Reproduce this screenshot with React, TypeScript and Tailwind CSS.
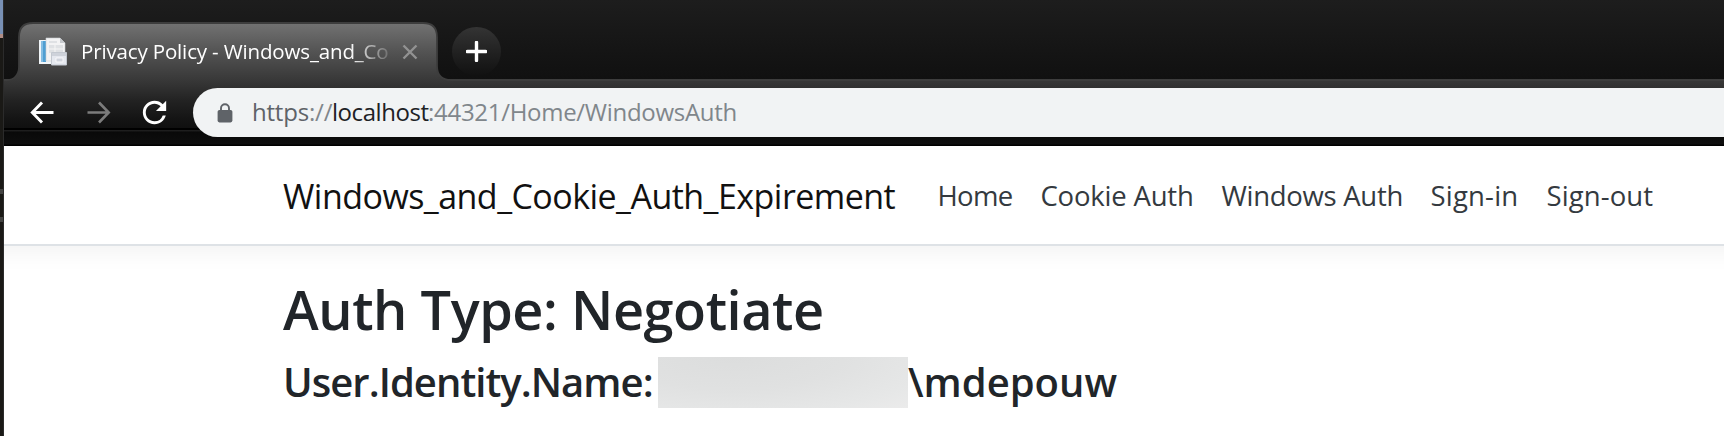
const navItems = [
  { label: "Home", className: "w-[103px] tracking-[-0.7px]" },
  { label: "Cookie Auth", className: "w-[181px] tracking-[-0.2px]" },
  { label: "Windows Auth", className: "w-[209px] tracking-[-0.3px]" },
  { label: "Sign-in", className: "w-[116px] tracking-[0.2px]" },
  { label: "Sign-out", className: "tracking-[0.1px]" },
];

function Favicon() {
  return (
    <svg className="h-[30px] w-[30px] shrink-0" viewBox="0 0 30 30">
      <path d="M1 3h17v24H1z" fill="#f1f5f8" />
      <path d="M3 4h5v21H3z" fill="#4f9fd3" />
      <path d="M3 4h2v21H3z" fill="#85bde2" />
      <path d="M8 1h14l5 5v18H8z" fill="#f3f3f4" stroke="#c9ccd0" strokeWidth=".6" />
      <path d="M22 1v5h5z" fill="#c6c9cd" />
      <path d="M11 4h8v2h-8zM11 8h14v8H11z" fill="#dfe1e4" />
      <path d="M17 8v14M11 12h14" stroke="#f6f6f6" strokeWidth="1" />
      <path d="M13.500 15.500h15v12.500h-15z" fill="#e5e8ef" stroke="#c3c8d0" />
      <path d="M14 16h14v3H14z" fill="#ced2da" />
      <path d="M18 21h7v4h-7z" fill="#cfd3dc" stroke="#f8f8fa" />
    </svg>
  );
}

function TabShape() {
  return (
    <svg className="absolute top-0 left-0 h-[82px] w-[452px]" viewBox="0 0 452 82">
      <defs>
        <linearGradient id="tab" x1="0" y1="22" x2="0" y2="82" gradientUnits="userSpaceOnUse">
          <stop offset="0" stopColor="#737373" />
          <stop offset=".5" stopColor="#535353" />
          <stop offset="1" stopColor="#363636" />
        </linearGradient>
      </defs>
      <path
        d="M0 82V80H3C10 80 15 75 15 67V37C15 28 20 23 29 23H419C428 23 433 28 433 37V66C433 75 438 80 447 80H452V82Z"
        fill="url(#tab)"
      />
      <path
        d="M0 80H3C10 80 15 75 15 67V37C15 28 20 23 29 23H419C428 23 433 28 433 37V66C433 75 438 80 447 80H452"
        fill="none"
        stroke="#3d3d3d"
        strokeWidth="1.8"
      />
    </svg>
  );
}

function TabStrip() {
  return (
    <div className="relative flex h-[82px] bg-linear-to-b from-[#1d1d1d] to-[#101010]">
      <div className="mt-auto h-[3px] w-full border-t-2 border-[#3d3d3d] bg-[#363636]" />
      <TabShape />
      <div className="absolute inset-0 flex items-start">
        <div className="mt-[22px] ml-[34px] flex h-[60px] items-center">
          <Favicon />
          <div className="ml-[13px] w-[308px] overflow-hidden pb-[2px] text-[20.5px] leading-[30px] tracking-[-0.15px] whitespace-nowrap text-white mask-[linear-gradient(to_right,black_268px,transparent_316px)]">
            Privacy Policy - Windows_and_Co
          </div>
          <svg className="ml-[13px] h-4 w-4" viewBox="0 0 16 16">
            <path d="M1.500 1.500L14.500 14.500M14.500 1.500L1.500 14.500" stroke="#929292" strokeWidth="2.4" />
          </svg>
        </div>
        <div className="mt-[27px] ml-[34px] flex h-[49px] w-[49px] items-center justify-center rounded-full bg-linear-to-b from-[#343434] to-[#111111]">
          <svg className="h-[21px] w-[21px]" viewBox="0 0 21 21">
            <path d="M10.500 1.400V19.600M1.400 10.500H19.600" stroke="#fff" strokeWidth="3.4" strokeLinecap="round" />
          </svg>
        </div>
      </div>
    </div>
  );
}

function Toolbar() {
  return (
    <div className="relative flex h-16 bg-[linear-gradient(to_bottom,#363636_0px,#232323_18px,#151515_36px,#101010_46px,#000_46px,#000_48px,#202020_48px,#1c1c1c_49px,#090909_50px,#0e0e0e_62px,#000_63px)]">
      <svg className="mt-[18px] ml-[25px] h-[25px] w-[26px]" viewBox="0 0 26 25">
        <path d="M13 2.500L3.300 12.500L13 22.500M3.500 12.500H24.500" fill="none" stroke="#fff" strokeWidth="2.9" />
      </svg>
      <svg className="mt-[18px] ml-[31px] h-[25px] w-[26px]" viewBox="0 0 26 25">
        <path d="M13 2.500L22.700 12.500L13 22.500M1.500 12.500H22.500" fill="none" stroke="#7c7c7c" strokeWidth="2.6" />
      </svg>
      <svg className="mt-[13px] ml-[25px] h-[35px] w-[35px]" viewBox="0 0 24 24" fill="#fff">
        <path d="M17.650 6.350A7.958 7.958 0 0 0 12 4c-4.420 0-7.990 3.580-7.990 8s3.570 8 7.990 8c3.730 0 6.840-2.550 7.730-6h-2.080A5.990 5.990 0 0 1 12 18c-3.310 0-6-2.690-6-6s2.690-6 6-6c1.660 0 3.140.690 4.220 1.780L13 11h7V4l-2.350 2.350z" />
      </svg>
      <div className="mt-[6px] ml-[21px] flex h-[49px] flex-1 items-center rounded-l-full bg-[#f1f3f4] pl-[24px]">
        <svg className="h-5 w-4" viewBox="0 0 16 20">
          <path d="M4 8V5.200a4 4 0 0 1 8 0V8" fill="none" stroke="#5f6368" strokeWidth="1.900" />
          <rect x=".6" y="7" width="14.800" height="12.400" rx="1.800" fill="#5f6368" />
        </svg>
        <div className="ml-[19px] flex pb-px text-[24px] leading-8 whitespace-pre">
          <span className="w-[80px] tracking-[-0.2px] text-[#5f6368]">
            https<span className="text-[#80868b]">://</span>
          </span>
          <span className="w-[96px] tracking-[-0.45px] text-[#202124]">localhost</span>
          <span className="tracking-[-0.29px] text-[#80868b]">:44321/Home/WindowsAuth</span>
        </div>
      </div>
    </div>
  );
}

export default function App() {
  return (
    <div className="flex h-[436px] w-[1724px] overflow-hidden bg-white font-['Open_Sans',sans-serif]">
      <div className="flex w-1 shrink-0 flex-col border-r border-[#2b2b2b] bg-[#1a1916]">
        <div className="h-[34px] bg-[#7890b5]" />
        <div className="h-1 bg-[#b08d85]" />
        <div className="mt-[151px] h-[5px] bg-[#444442]" />
        <div className="mt-[23px] h-[5px] bg-[#444442]" />
      </div>
      <div className="min-w-0 flex-1 overflow-hidden">
        <TabStrip />
        <Toolbar />
        <nav className="-mx-8 flex h-[100px] items-center border-b-2 border-[#dee2e6] pt-[2px] pl-[311px] shadow-[0_7px_21px_rgba(0,0,0,0.05)]">
          <a className="w-[654.5px] shrink-0 text-[34px] leading-[52px] tracking-[-0.54px] text-[#111]">
            Windows_and_Cookie_Auth_Expirement
          </a>
          <ul className="flex text-[27.5px] leading-[42px] whitespace-nowrap text-[#343a40]">
            {navItems.map((item) => (
              <li key={item.label} className={item.className}>
                {item.label}
              </li>
            ))}
          </ul>
        </nav>
        <main className="pt-[30px] pl-[279px] font-semibold text-[#212529]">
          <h2 className="text-[54px] leading-[67px] tracking-[-0.42px]">Auth Type: Negotiate</h2>
          <div className="mt-[14px] flex h-[51px] items-center text-[40px] whitespace-nowrap">
            <h4 className="w-[375px] pb-[2px] leading-[50px] tracking-[-0.96px]">User.Identity.Name:</h4>
            <div className="h-[51px] w-[250px] bg-[radial-gradient(ellipse_at_30%_0%,#dcdddd_0%,#e0e1e1_45%,#e6e7e7_80%,#ebebeb_100%)]" />
            <span className="pb-[2px] leading-[50px]">\mdepouw</span>
          </div>
        </main>
      </div>
    </div>
  );
}
